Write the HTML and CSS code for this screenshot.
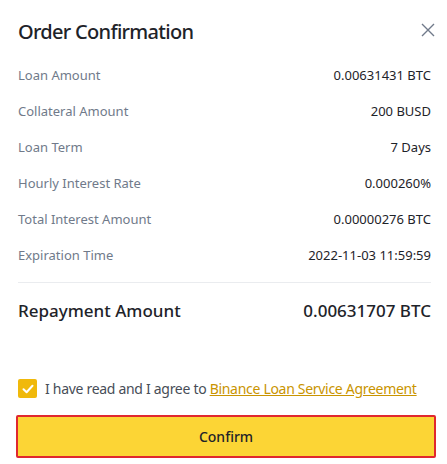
FILE: index.html
```html
<!DOCTYPE html>
<html lang="en">
<head>
    <meta charset="UTF-8">
    <meta name="viewport" content="width=device-width, initial-scale=1.0">
    <title>Order Confirmation</title>
    <link rel="stylesheet" href="styles.css">
</head>
<body>
<div class="modal">
    <header class="modal-head">
        <h1 class="modal-title">Order Confirmation</h1>
        <button class="close-btn" aria-label="Close">
            <svg width="14" height="14" viewBox="0 0 14 14">
                <path d="M1 1L13 13M13 1L1 13" stroke="#707A8A" stroke-width="1.4" fill="none"/>
            </svg>
        </button>
    </header>

    <div class="details">
        <div class="row"><span class="label">Loan Amount</span><span class="value">0.00631431 BTC</span></div>
        <div class="row"><span class="label">Collateral Amount</span><span class="value">200 BUSD</span></div>
        <div class="row"><span class="label">Loan Term</span><span class="value">7 Days</span></div>
        <div class="row"><span class="label">Hourly Interest Rate</span><span class="value">0.000260%</span></div>
        <div class="row"><span class="label">Total Interest Amount</span><span class="value">0.00000276 BTC</span></div>
        <div class="row"><span class="label">Expiration Time</span><span class="value">2022-11-03 11:59:59</span></div>
    </div>

    <div class="total">
        <span>Repayment Amount</span>
        <span class="total-value">0.00631707 BTC</span>
    </div>

    <label class="agree">
        <span class="checkbox">
            <svg width="14" height="14" viewBox="0 0 14 14">
                <path d="M2.5 7.2L5.6 10.2L11.5 3.8" stroke="#fff" stroke-width="2" fill="none" stroke-linecap="round" stroke-linejoin="round"/>
            </svg>
        </span>
        <span>I have read and I agree to <a href="#" class="link">Binance Loan Service Agreement</a></span>
    </label>

    <button class="confirm-btn">Confirm</button>
</div>
</body>
</html>
```

FILE: styles.css
```css
body {
    margin: 0;
    background: #fff;
    font-family: 'Noto Sans', 'Open Sans', sans-serif;
    color: #1E2329;
}

.modal {
    width: 447px;
    height: 464px;
    box-sizing: border-box;
    padding: 16px 13px 0 18px;
    display: flex;
    flex-direction: column;
}

.modal-head {
    display: flex;
    justify-content: space-between;
    align-items: center;
    height: 30px;
}

.modal-title {
    margin: 0;
    font-size: 20px;
    font-weight: 500;
    letter-spacing: -0.7px;
    color: #1E2329;
}

.close-btn {
    background: none;
    border: none;
    padding: 0;
    margin: -2px -2px 0 0;
    width: 16px;
    height: 16px;
    display: flex;
    align-items: center;
    justify-content: center;
    cursor: pointer;
}

.details {
    margin-top: 11px;
    padding-right: 3px;
}

.row {
    display: flex;
    justify-content: space-between;
    align-items: center;
    height: 36px;
    font-size: 13px;
}

.label {
    color: #707A8A;
}

.value {
    color: #1E2329;
}

.total {
    margin: 9px 3px 0 0;
    border-top: 1px solid #EAECEF;
    height: 54px;
    display: flex;
    justify-content: space-between;
    align-items: center;
    font-size: 17px;
    font-weight: 500;
}

.agree {
    margin-top: 42px;
    display: flex;
    align-items: center;
    gap: 8px;
    font-size: 14px;
    letter-spacing: -0.3px;
    color: #474D57;
}

.checkbox {
    width: 19px;
    height: 19px;
    border-radius: 2px;
    background: #F0B90B;
    display: flex;
    align-items: center;
    justify-content: center;
}

.link {
    color: #C99400;
    text-decoration: underline;
}

.confirm-btn {
    margin: 17px 0 0 -2px;
    width: 420px;
    height: 43px;
    background: #FCD535;
    border: 2px solid #E0282E;
    border-radius: 2px;
    font-family: inherit;
    font-size: 14px;
    font-weight: 500;
    color: #1E2329;
}
```
